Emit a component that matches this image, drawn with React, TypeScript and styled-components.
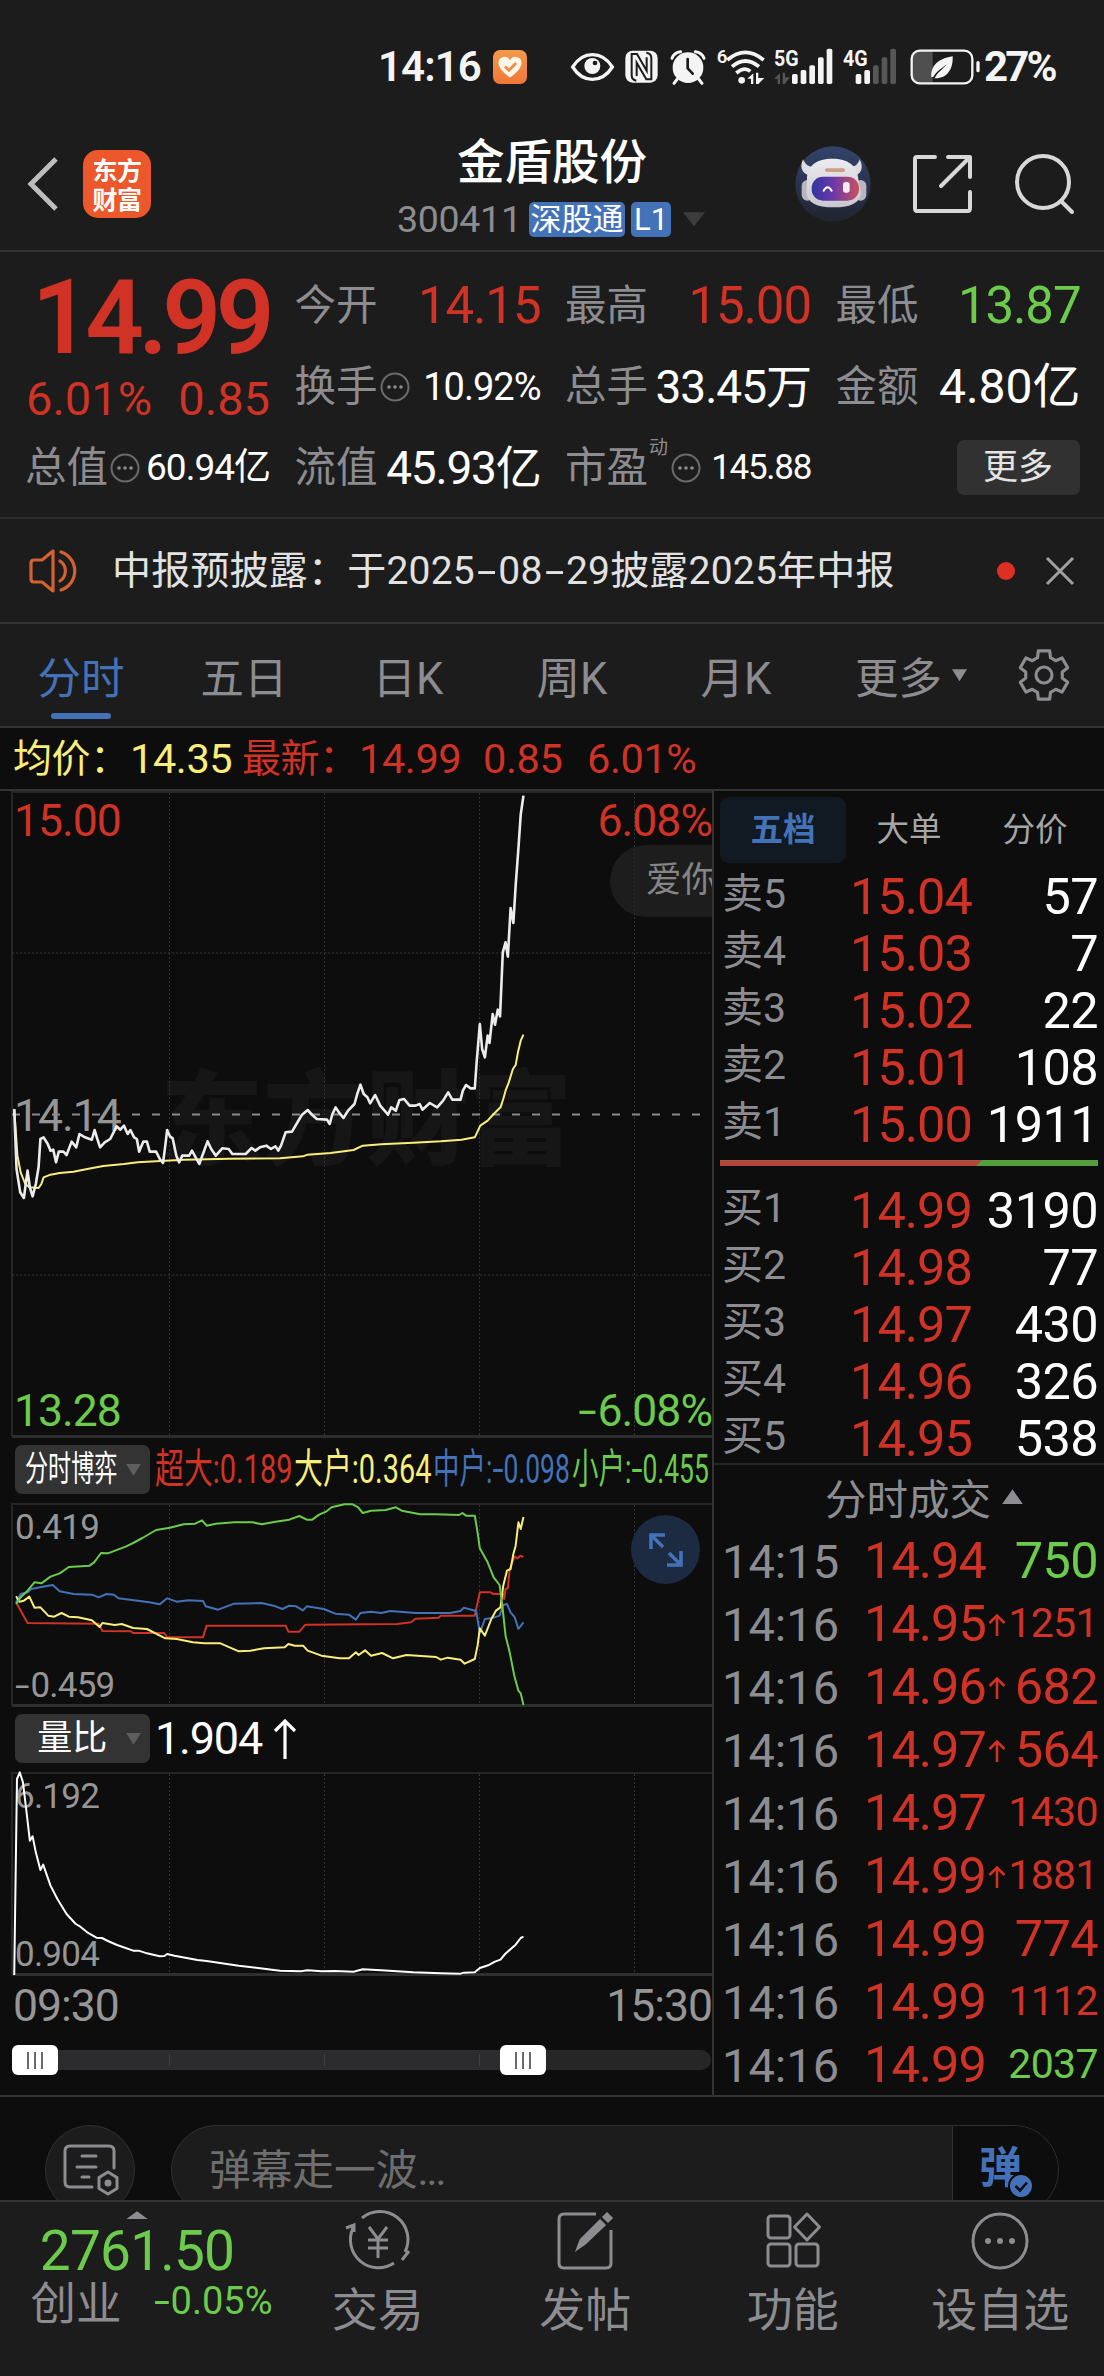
import React from 'react';
import styled, { createGlobalStyle } from 'styled-components';

const RED = '#d03226';
const GREEN = '#6ccb4c';
const BLUE = '#4472b8';
const GREY = '#8c8c91';
const YELLOW = '#f9ee7a';
const PANEL = '#1c1c1c';
const INK = '#0d0d0d';
const LINE = '#333';

const Global = createGlobalStyle`
  * { box-sizing: border-box; }
  body { margin: 0; background: ${INK}; }
  svg { display: block; flex: none; overflow: visible; }
`;

const Page = styled.div`
  width: 1104px;
  height: 2376px;
  overflow: hidden;
  display: flex;
  flex-direction: column;
  background: ${INK};
  color: #fff;
  font-family: Roboto, 'Noto Sans CJK SC', sans-serif;
  white-space: nowrap;
`;

const Txt = styled.span<{ $s: number; $c?: string; $w?: number; $ls?: number }>`
  font-size: ${p => p.$s}px;
  color: ${p => p.$c || 'inherit'};
  font-weight: ${p => p.$w || 400};
  letter-spacing: ${p => p.$ls || 0}px;
  line-height: 1;
`;

/* a hyphen stretched to the width of a minus sign */
const Hyphen = styled.span<{ $w?: number; $k?: number }>`
  display: inline-block;
  width: ${p => p.$w || 0.47}em;
  letter-spacing: 0;
  text-align: center;
  transform: scaleX(${p => p.$k || 1.5});
`;

/* status bar */
const StatusBar = styled.header`
  height: 118px;
  padding: 16px 40px 0 378px;
  display: flex;
  align-items: center;
  background: ${PANEL};
  color: #f4f4f4;
`;
const StatusIcons = styled.div`
  display: flex;
  align-items: center;
  margin-left: 44px;
  flex: 1;
`;

/* title bar */
const TitleBar = styled.div`
  height: 134px;
  display: flex;
  align-items: center;
  background: ${PANEL};
  border-bottom: 2px solid ${LINE};
  padding: 0 28px;
`;
const Side = styled.div<{ $end?: boolean }>`
  width: 300px;
  display: flex;
  align-items: center;
  justify-content: ${p => (p.$end ? 'flex-end' : 'flex-start')};
`;
const Logo = styled.div`
  width: 68px;
  height: 68px;
  margin-left: 25px;
  border-radius: 15px;
  background: #ec572b;
  display: grid;
  place-content: center;
  font: 700 25px/29px 'Noto Sans CJK SC', sans-serif;
  letter-spacing: -0.6px;
`;
const TitleMid = styled.div`
  flex: 1;
  display: flex;
  flex-direction: column;
  align-items: center;
  padding-top: 5px;
`;
const StockName = styled.h1`
  margin: 0;
  font-size: 47.5px;
  font-weight: 500;
  line-height: 56px;
`;
const CodeRow = styled.div`
  width: 310px;
  height: 36px;
  margin: 10px 0 0 0;
  display: flex;
  align-items: center;
`;
const Code = styled.span`
  width: 132px;
  font-size: 37.5px;
  letter-spacing: -0.3px;
  line-height: 36px;
  color: ${GREY};
`;
const Tag = styled.span<{ $w: number }>`
  width: ${p => p.$w}px;
  height: 35px;
  margin-right: 6px;
  border-radius: 5px;
  background: ${BLUE};
  font-size: 31px;
  line-height: 35px;
  text-align: center;
`;

/* quote panel */
const Quote = styled.section`
  height: 268px;
  padding: 24px 25px 18px;
  display: grid;
  grid-template-columns: 243px 244px 244px 243px;
  column-gap: 26.5px;
  grid-template-rows: 60px repeat(2, 81px);
  background: ${PANEL};
  border-bottom: 2px solid #2a2a2a;
`;
const LastPrice = styled.div`
  grid-row: 1 / 3;
  display: flex;
  flex-direction: column;
  align-items: flex-end;
  color: ${RED};
`;
const BigPrice = styled.div`
  font-size: 103px;
  font-weight: 600;
  line-height: 83px;
  letter-spacing: -5.5px;
  margin-right: -1px;
`;
const ChangeRow = styled.div`
  width: 244px;
  margin-right: -2px;
  display: flex;
  justify-content: space-between;
  font-size: 47px;
  line-height: 80px;
`;
const Cell = styled.div`
  height: 60px;
  align-self: end;
  display: flex;
  align-items: center;
  justify-content: space-between;
  margin-right: -2px;
`;
const Label = styled.span`
  display: flex;
  align-items: center;
  gap: 2px;
  font-size: 41.5px;
  line-height: 60px;
  color: ${GREY};
`;
const Sup = styled.sup`
  font-size: 19px;
  line-height: 20px;
  align-self: flex-start;
  margin-left: -1px;
  margin-right: -10px;
`;
const MoreButton = styled.button`
  width: 123px;
  height: 55px;
  justify-self: end;
  align-self: end;
  margin: 0 -1px 3px 0;
  padding: 0;
  border: 0;
  border-radius: 7px;
  background: #313131;
  color: #e4e4e4;
  font: 35px/51px Roboto, 'Noto Sans CJK SC', sans-serif;
`;

/* notice */
const Notice = styled.section`
  height: 105px;
  padding: 0 29px;
  display: flex;
  align-items: center;
  background: ${PANEL};
  border-bottom: 2px solid ${LINE};
  color: #e2e2e2;
`;
const NoticeText = styled.p`
  flex: 1;
  margin: 0 0 0 31px;
  font-size: 39px;
  letter-spacing: 0.2px;
  line-height: 50px;
`;
const Dot = styled.i`
  width: 18px;
  height: 18px;
  border-radius: 9px;
  background: #dd3023;
  margin-right: 30px;
`;

/* period tabs */
const Tabs = styled.nav`
  height: 104px;
  display: grid;
  grid-template-columns: 162px repeat(4, 164px) 186px 1fr;
  align-items: center;
  background: ${PANEL};
  border-bottom: 2px solid ${LINE};
`;
const Tab = styled.div<{ $on?: boolean; $shift?: number }>`
  height: 102px;
  display: flex;
  align-items: center;
  justify-content: center;
  position: relative;
  padding-right: ${p => p.$shift || 0}px;
  font-size: 43.5px;
  color: ${p => (p.$on ? BLUE : GREY)};
  &::after {
    content: '';
    display: ${p => (p.$on ? 'block' : 'none')};
    position: absolute;
    left: 51px;
    bottom: 7px;
    width: 60px;
    height: 6px;
    border-radius: 3px;
    background: ${BLUE};
  }
`;

const Summary = styled.div`
  height: 63px;
  padding: 0 13px;
  display: flex;
  align-items: center;
  color: ${RED};
  border-bottom: 2px solid ${LINE};
`;
const SumPart = styled.span<{ $w: number; $yellow?: boolean; $cjk?: boolean }>`
  width: ${p => p.$w}px;
  line-height: 60px;
  font-size: ${p => (p.$cjk ? 39 : 41.5)}px;
  letter-spacing: -0.4px;
  ${p => (p.$yellow ? `color: ${YELLOW};` : '')}
`;

/* main area */
const Main = styled.main`
  height: 1306px;
  display: flex;
  border-bottom: 2px solid ${LINE};
`;
const Charts = styled.div`
  width: 714px;
  border-right: 2px solid ${LINE};
  display: flex;
  flex-direction: column;
  overflow: hidden;
`;
const ChartBox = styled.div<{ $h: number }>`
  position: relative;
  height: ${p => p.$h}px;
`;
const Overlay = styled.span<{ $x?: number; $r?: number; $y: number; $s: number; $c?: string }>`
  position: absolute;
  ${p => (p.$x !== undefined ? `left: ${p.$x}px;` : `right: ${p.$r}px;`)}
  top: ${p => p.$y - 25}px;
  font-size: ${p => p.$s}px;
  letter-spacing: -0.022em;
  line-height: 50px;
  color: ${p => p.$c || '#969696'};
`;
const Watermark = styled.div`
  position: absolute;
  left: 160px;
  top: 262px;
  font: 900 103px/120px 'Noto Sans CJK SC', sans-serif;
  color: #161616;
`;
const Bubble = styled.div`
  position: absolute;
  left: 610px;
  top: 54px;
  width: 140px;
  height: 72px;
  padding-left: 36px;
  border-radius: 36px;
  background: rgba(40, 40, 40, 0.62);
  color: #858585;
  font-size: 35.5px;
  line-height: 70px;
`;
const IndicatorRow = styled.div<{ $h: number; $pt: number }>`
  height: ${p => p.$h}px;
  padding: ${p => p.$pt}px 0 0 15px;
  display: flex;
  align-items: flex-start;
`;
const Picker = styled.div`
  width: 135px;
  height: 49px;
  padding: 0 9px 0 10px;
  border-radius: 7px;
  background: #333;
  display: flex;
  align-items: center;
  justify-content: space-between;
  font-size: 35px;
  line-height: 46px;
`;
const Caret = styled.i<{ $c?: string; $w: number; $h: number; $up?: boolean; $ml?: number }>`
  width: ${p => p.$w}px;
  height: ${p => p.$h}px;
  margin-left: ${p => p.$ml || 0}px;
  flex: none;
  background: ${p => p.$c || '#5e5e5e'};
  clip-path: ${p => (p.$up ? 'polygon(50% 0, 100% 100%, 0 100%)' : 'polygon(0 0, 100% 0, 50% 100%)')};
`;
const Squeeze = styled.span<{ $w: number; $k: number; $c?: string; $s: number }>`
  width: ${p => p.$w}px;
  flex: none;
  color: ${p => p.$c || '#fff'};
  font-size: ${p => p.$s}px;
  line-height: 48px;
  > span {
    display: inline-block;
    transform: scaleX(${p => p.$k});
    transform-origin: 0 50%;
  }
`;
const Legend = styled.div`
  display: flex;
  margin-left: 5px;
`;
const Expand = styled.div`
  position: absolute;
  left: 631px;
  top: 12px;
  width: 69px;
  height: 69px;
  border-radius: 50%;
  background: #1c2b42;
  display: grid;
  place-items: center;
`;
const TimeAxis = styled.div`
  height: 60px;
  padding: 0 0 0 13px;
  display: flex;
  justify-content: space-between;
  font-size: 44.5px;
  letter-spacing: -1px;
  line-height: 61px;
  color: #969696;
`;
const Slider = styled.div`
  position: relative;
  height: 20px;
  margin: 14px 1px 0 12px;
  border-radius: 10px;
  background: linear-gradient(90deg, #2c2c2e 513px, #262626 513px);
`;
const Tick = styled.i<{ $x: number }>`
  position: absolute;
  left: ${p => p.$x}px;
  top: 4px;
  width: 1px;
  height: 12px;
  background: #414143;
`;
const Handle = styled.div<{ $x: number }>`
  position: absolute;
  left: ${p => p.$x}px;
  top: -5px;
  width: 46px;
  height: 30px;
  border-radius: 6px;
  background: #fff;
  display: flex;
  align-items: center;
  justify-content: center;
  gap: 5px;
  i { width: 2px; height: 17px; background: #6a6a6a; }
`;

/* order book */
const Book = styled.aside`
  width: 390px;
  display: flex;
  flex-direction: column;
`;
const BookTabs = styled.div`
  height: 72px;
  padding: 6px 6px 0;
  display: grid;
  grid-template-columns: repeat(3, 126px);
`;
const BookTab = styled.div<{ $on?: boolean }>`
  height: 66px;
  border-radius: 9px;
  background: ${p => (p.$on ? '#111a22' : 'transparent')};
  color: ${p => (p.$on ? BLUE : '#a6a6a6')};
  font-weight: ${p => (p.$on ? 700 : 400)};
  font-size: 32.5px;
  line-height: 67px;
  text-align: center;
`;
const Row = styled.div`
  height: 57px;
  padding: 0 6px 0 8px;
  display: grid;
  grid-template-columns: 128px 124px 1fr;
  align-items: center;
  line-height: 57px;
`;
const Side5 = styled.span`
  font-size: 41px;
  color: ${GREY};
  padding-bottom: 5px;
  line-height: 52px;
`;
const Price = styled.span`
  font-size: 50.5px;
  letter-spacing: -1px;
  color: ${RED};
`;
const Vol = styled.span<{ $c?: string; $s?: number }>`
  font-size: ${p => p.$s || 50.5}px;
  letter-spacing: -0.6px;
  color: ${p => p.$c || '#fff'};
  text-align: right;
`;
const Ratio = styled.div`
  height: 6px;
  margin: 7px 6px 16px;
  background: #539f3c;
  &::before {
    content: '';
    display: block;
    width: 262px;
    height: 6px;
    background: #b5453c;
    clip-path: polygon(0 0, 100% 0, calc(100% - 6px) 100%, 0 100%);
  }
`;
const DealsHead = styled.div`
  height: 67px;
  margin-top: -4px;
  border-top: 2px solid #262626;
  display: flex;
  align-items: center;
  justify-content: center;
  gap: 11px;
  font-size: 41.5px;
  color: ${GREY};
  padding-left: 30px;
`;
const Deal = styled.div`
  height: 63px;
  padding: 0 6px 0 8px;
  display: grid;
  grid-template-columns: 142px 124px 18px 1fr;
  align-items: center;
  line-height: 63px;
`;
const DealTime = styled.span`
  font-size: 47px;
  color: ${GREY};
  padding-top: 2px;
`;

/* comments strip */
const Strip = styled.div`
  height: 103px;
  padding: 28px 45px 0;
  display: flex;
  align-items: flex-start;
  gap: 36px;
  overflow: hidden;
`;
const RoundBtn = styled.div`
  width: 90px;
  height: 90px;
  flex: none;
  border: 1px solid #303030;
  border-radius: 50%;
  background: ${PANEL};
  display: grid;
  place-items: center;
`;
const InputPill = styled.div`
  width: 888px;
  height: 90px;
  border: 1px solid #303030;
  border-radius: 45px;
  background: ${PANEL};
  display: flex;
  overflow: hidden;
  padding-left: 37px;
  color: #6e6e6e;
  font-size: 41.7px;
  line-height: 90px;
`;
const DanToggle = styled.div`
  width: 106px;
  margin-left: auto;
  border-left: 1px solid #303030;
  background: ${INK};
  position: relative;
  padding-left: 26px;
  color: ${BLUE};
  font-size: 43px;
  font-weight: 700;
  line-height: 85px;
  svg { position: absolute; left: 55px; top: 47px; }
`;

/* bottom bar */
const BottomBar = styled.footer`
  height: 176px;
  display: grid;
  grid-template-columns: 274px repeat(4, 207.5px);
  background: ${PANEL};
  border-top: 2px solid ${LINE};
`;
const IndexCell = styled.div`
  display: flex;
  flex-direction: column;
  align-items: center;
  padding-top: 9px;
  color: ${GREEN};
`;
const IndexRow = styled.div`
  width: 242px;
  margin-left: 29px;
  margin-top: -1px;
  display: flex;
  justify-content: space-between;
  line-height: 46px;
`;
const NavItem = styled.div`
  display: flex;
  flex-direction: column;
  align-items: center;
  padding-top: 8px;
  gap: 9px;
  color: ${GREY};
  font-size: 46px;
  line-height: 58px;
`;

const DotsIcon = () => (
  <svg width="30" height="30" viewBox="0 0 30 30">
    <circle cx="15" cy="15" r="13.5" fill="none" stroke="#6b6b6b" strokeWidth="2" />
    {[9, 15, 21].map(x => <circle key={x} cx={x} cy="15" r="1.8" fill="#8c8c91" />)}
  </svg>
);

const EyeIcon = () => (
  <svg width="43" height="30" viewBox="0 0 129 90">
    <path d="M5 45C22 18 42 8 64 8s43 10 60 37C107 72 87 82 64 82S22 72 5 45Z" fill="none" stroke="#f4f4f4" strokeWidth="10" />
    <circle cx="64" cy="42" r="24" fill="#f4f4f4" />
    <circle cx="72" cy="33" r="7" fill="#1c1c1c" />
  </svg>
);
const NfcIcon = () => (
  <svg width="33" height="33" viewBox="0 0 99 99">
    <rect x="1" y="2" width="97" height="96" rx="22" fill="#f4f4f4" />
    <path d="M34 92Q20 90 20 76V12L36 12L65 62V22M64 8Q79 10 79 24V88L64 88L35 38V78" fill="none" stroke="#1c1c1c" strokeWidth="6" />
  </svg>
);
const AlarmIcon = () => (
  <svg width="36" height="36" viewBox="0 0 108 108">
    <circle cx="54" cy="56" r="46" fill="#f4f4f4" />
    <path d="M6 28A30 30 0 0 1 32 8M76 8A30 30 0 0 1 102 28" stroke="#f4f4f4" strokeWidth="9" fill="none" strokeLinecap="round" />
    <path d="M22 90L12 103M86 90L96 103" stroke="#f4f4f4" strokeWidth="9" strokeLinecap="round" />
    <path d="M53 30V58L68 74" fill="none" stroke="#1c1c1c" strokeWidth="8" strokeLinecap="round" />
  </svg>
);
const WifiIcon = () => (
  <svg width="50" height="37" viewBox="0 0 150 111">
    <text x="2" y="46" fontSize="56" fontWeight="600" fill="#f4f4f4">6</text>
    <g fill="none" stroke="#f4f4f4" strokeWidth="11">
      <path d="M34 36Q88 -10 143 36" />
      <path d="M48 56Q88 22 129 56" />
      <path d="M61 75Q86 54 103 70" />
    </g>
    <circle cx="77" cy="97" r="10" fill="#f4f4f4" />
    <path d="M94 92L112 76V108H105V92ZM120 74H127V90H145L127 108H120Z" fill="#f4f4f4" />
  </svg>
);
const SignalIcon = ({ label, bars, w }: { label: string; bars: [number, number, boolean][]; w: number }) => (
  <svg width={w / 3} height="37" viewBox={`0 0 ${w} 111`}>
    <text x="0" y="54" fontSize="66" fontWeight="700" fill="#f4f4f4" textLength="74" lengthAdjust="spacingAndGlyphs">{label}</text>
    {label === '5G' && <path d="M0 92L18 76V108H11V92ZM26 74H33V88H48L32 108H26Z" fill="#555" />}
    {bars.map(([x, h, on]) => <rect key={x} x={x} y={108 - h} width="17" height={h} rx="5" fill={on ? '#f4f4f4' : '#575757'} />)}
  </svg>
);
const BatteryIcon = () => (
  <svg width="72" height="36" viewBox="0 0 216 108">
    <clipPath id="cell"><rect x="7" y="7" width="178" height="94" rx="22" /></clipPath>
    <rect x="0" y="0" width="68" height="108" fill="#4f4f4f" clipPath="url(#cell)" />
    <rect x="5" y="5" width="182" height="98" rx="24" fill="none" stroke="#f4f4f4" strokeWidth="7" />
    <rect x="199" y="36" width="10" height="34" rx="5" fill="#f4f4f4" />
    <path d="M128 22C90 28 62 46 64 84L70 84C78 68 96 58 110 46C98 62 82 70 74 88C110 90 130 62 128 22Z" fill="#f4f4f4" />
  </svg>
);
const Badge = styled.svg`
  margin-left: 12px;
`;
const HeartBadge = () => (
  <Badge width="34" height="34" viewBox="0 0 34 34">
    <defs><linearGradient id="hb" x1="0" y1="0" x2="0" y2="1"><stop offset="0" stopColor="#f39a4c" /><stop offset="1" stopColor="#ee7735" /></linearGradient></defs>
    <rect width="34" height="34" rx="7" fill="url(#hb)" />
    <path d="M17 27.5C9 22 5.500 17 5.500 12.500A6 6 0 0 1 17 10.500A6 6 0 0 1 28.500 12.500C28.500 17 25 22 17 27.500Z" fill="#fff6ea" />
    <path d="M12 16.500L16 20.500L23 13" fill="none" stroke="#f0873f" strokeWidth="2.600" />
  </Badge>
);

const Robot = () => (
  <svg width="76" height="76" viewBox="0 0 228 228">
    <defs>
      <linearGradient id="bg" x1="0" y1="0" x2="0" y2="1"><stop offset="0" stopColor="#33436b" /><stop offset="1" stopColor="#20242f" /></linearGradient>
      <linearGradient id="visor" x1="0" y1="0" x2="1" y2="0"><stop offset="0" stopColor="#3136a0" /><stop offset=".45" stopColor="#6a38a8" /><stop offset="1" stopColor="#c9535f" /></linearGradient>
      <linearGradient id="shell" x1="0" y1="0" x2="0" y2="1"><stop offset="0" stopColor="#ecebef" /><stop offset="1" stopColor="#c9c7cf" /></linearGradient>
    </defs>
    <circle cx="114" cy="114" r="113" fill="url(#bg)" />
    <path d="M24 40C14 62 20 80 40 88L62 60C44 66 32 58 24 40ZM194 40C206 62 200 80 184 88L160 60C176 66 188 58 194 40Z" fill="#dddbe3" />
    <rect x="20" y="102" width="34" height="62" rx="17" fill="#b9b6c0" />
    <rect x="180" y="102" width="34" height="62" rx="17" fill="#b9b6c0" />
    <path d="M36 100C36 58 66 38 112 38S188 58 190 100L198 140C196 170 168 184 116 184S38 170 34 140Z" fill="url(#shell)" />
    <rect x="90" y="67" width="60" height="11" rx="5" fill="#c9a184" />
    <rect x="50" y="92" width="142" height="72" rx="34" fill="url(#visor)" />
    <path d="M86 134Q98 114 110 134" fill="none" stroke="#fff" strokeWidth="6" strokeLinecap="round" />
    <rect x="144" y="108" width="20" height="32" rx="8" fill="#f8e9f2" />
  </svg>
);
const HeadIcon = styled.svg<{ $ml: number }>`
  margin-left: ${p => p.$ml}px;
`;
const ShareIcon = () => (
  <HeadIcon $ml={41} width="60" height="60" viewBox="0 0 60 60" fill="none" stroke="#d8d8d8" strokeWidth="4" strokeLinecap="round" strokeLinejoin="round">
    <path d="M23 3H5Q3 3 3 5V54Q3 57 5 57H56Q58 57 58 54V38M36 3H58V23M57 4L29 32" />
  </HeadIcon>
);
const SearchIcon = () => (
  <HeadIcon $ml={42} width="62" height="62" viewBox="0 0 62 62" fill="none" stroke="#d8d8d8" strokeWidth="4" strokeLinecap="round">
    <circle cx="29" cy="29" r="26" />
    <path d="M47 48L58 59" />
  </HeadIcon>
);
const Speaker = () => (
  <svg width="52" height="44" viewBox="0 0 52 44" fill="none" stroke="#d2622f" strokeWidth="3.200" strokeLinejoin="round" strokeLinecap="round">
    <path d="M24 2V42L13 33H5Q2 33 2 30V14Q2 11 5 11H13Z" />
    <path d="M31 12A12 12 0 0 1 31 32M32 3A20 20 0 0 1 32 41" />
  </svg>
);
const Gear = () => {
  const pts: string[] = [];
  for (let i = 0; i < 6; i++) {
    const a = (i * Math.PI) / 3 - Math.PI / 2;
    [[-0.36, 18.5], [-0.23, 24.8], [0.23, 24.8], [0.36, 18.5]].forEach(([d, r]) =>
      pts.push(`${(26 + r * Math.cos(a + d)).toFixed(1)},${(26 + r * Math.sin(a + d)).toFixed(1)}`));
  }
  return (
    <svg width="52" height="52" viewBox="0 0 52 52" fill="none" stroke={GREY} strokeWidth="3.200" strokeLinejoin="round">
      <polygon points={pts.join(' ')} />
      <circle cx="26" cy="26" r="8" />
    </svg>
  );
};

const PRICE = '31,990 36,1170 44,1240 52,1257 60,1175 65,1225 71,1252 78,1215 84,1165 88,1080 95,1075 104,1095 110,1115 116,1112 122,1150 128,1118 138,1118 145,1128 156,1088 166,1105 173,1065 185,1075 200,1082 206,1053 212,1080 218,1105 228,1090 240,1080 254,1042 262,1052 270,1040 278,1065 284,1053 292,1075 298,1080 303,1118 312,1088 320,1088 326,1118 340,1118 348,1140 355,1152 360,1100 364,1053 370,1072 376,1078 384,1130 390,1150 397,1130 412,1130 418,1115 426,1135 434,1155 442,1125 452,1087 460,1110 470,1130 484,1108 498,1110 506,1125 535,1125 548,1107 556,1115 566,1105 580,1100 590,1110 600,1102 606,1115 612,1100 622,1060 636,1058 652,1020 658,1007 670,993 680,1008 690,1020 712,1022 718,1035 724,1005 731,985 738,1000 748,1017 758,995 772,975 778,945 785,917 792,945 800,955 806,973 817,948 828,980 845,1007 852,985 862,995 870,963 880,960 892,980 905,980 914,975 920,992 936,972 952,985 965,965 976,940 985,962 1003,962 1008,935 1015,918 1025,928 1034,928 1038,850 1045,735 1050,810 1056,835 1062,770 1066,792 1073,705 1078,737 1084,692 1089,712 1095,520 1101,490 1106,533 1112,387 1118,432 1123,320 1129,208 1134,107 1140,50';
const AVERAGE = '31,990 38,1130 45,1180 55,1215 65,1225 84,1227 90,1215 95,1195 110,1187 130,1182 160,1178 190,1170 225,1161 270,1155 300,1150 350,1146 400,1142 500,1139 610,1138 660,1132 670,1127 720,1122 770,1113 790,1100 830,1096 900,1091 960,1087 1005,1082 1034,1075 1046,1040 1062,1025 1075,1005 1090,985 1096,960 1101,935 1108,910 1117,870 1123,858 1128,820 1134,785 1140,767';
const SMALL = '35,525 45,505 60,485 75,460 90,463 110,443 130,433 150,414 195,410 205,400 220,372 235,373 275,352 290,342 310,327 340,303 370,296 400,286 425,284 440,274 450,290 470,284 510,280 550,280 570,286 600,278 630,272 652,261 668,272 680,272 695,257 710,248 722,235 750,226 768,226 780,235 790,252 808,245 840,243 862,235 875,245 915,256 950,256 1000,258 1007,252 1015,260 1034,260 1040,310 1045,358 1062,400 1075,445 1088,468 1094,530 1101,620 1110,670 1120,740 1129,785 1134,793 1140,828';
const MIDDLE = '35,520 45,495 60,490 68,480 90,474 115,468 130,487 160,495 200,497 215,505 232,495 248,497 258,508 300,515 325,520 348,526 364,508 385,518 410,514 442,516 448,532 475,542 510,524 570,522 600,532 615,540 630,530 645,532 660,544 668,532 705,540 730,554 760,557 775,572 785,552 808,548 830,552 850,546 905,552 980,552 1003,546 1010,536 1037,546 1045,612 1056,570 1070,568 1088,560 1096,528 1104,525 1112,550 1121,565 1129,600 1140,580';
const LARGE = '35,502 42,518 52,515 64,503 75,536 88,535 105,560 118,563 134,552 150,563 170,565 200,574 217,594 223,582 250,588 265,585 290,597 320,600 360,628 385,630 420,640 445,643 480,643 500,655 520,667 545,665 575,658 620,655 628,645 642,650 660,650 670,665 700,680 740,688 760,688 775,670 781,678 795,664 808,680 832,672 856,688 885,678 950,684 960,692 975,686 1003,692 1012,704 1034,690 1040,650 1045,598 1056,620 1070,570 1080,545 1090,535 1096,470 1104,425 1112,420 1118,375 1123,350 1129,280 1134,300 1140,264';
const HUGE = '35,520 60,582 215,584 223,606 285,607 290,612 357,612 364,624 442,625 450,590 622,590 628,608 652,608 665,587 865,585 895,580 905,569 955,566 960,560 1034,560 1045,490 1068,490 1075,495 1095,495 1098,510 1101,480 1106,478 1110,420 1117,395 1121,383 1127,388 1133,380 1140,384';
const RATIO = '31,648 37,60 43,40 50,70 57,150 65,245 71,232 78,280 88,333 94,317 110,380 125,420 145,465 165,495 175,503 190,520 210,536 222,537 235,546 255,558 290,575 302,575 320,583 348,592 358,591 364,585 380,590 430,603 450,606 520,620 610,635 655,637 670,634 700,637 730,636 770,638 790,631 830,634 900,640 960,643 1003,644 1010,641 1034,640 1045,627 1065,618 1078,608 1090,602 1100,585 1123,557 1134,537 1140,533';

const PlotSvg = styled.svg`
  position: relative;
`;
type Serie = { pts: string; c: string; w?: number };
const Plot = ({ h, top, series, rows = [], mid }: { h: number; top: number; series: Serie[]; rows?: number[]; mid?: number }) => (
  <PlotSvg width="712" height={h}>
    <path d={`M712 1H12V${h - 1.5}`} fill="none" stroke="#262626" strokeWidth="2" />
    <path d={`M12 ${h - 1.5}H712`} stroke="#2e2e2e" strokeWidth="3" />
    {[169.5, 324.5, 479.5, 634.5].map(x => <path key={x} d={`M${x} 2V${h - 3}`} stroke="#343434" strokeDasharray="2 2" />)}
    {rows.map(y => <path key={y} d={`M12 ${y}H712`} stroke="#343434" strokeDasharray="2 2" />)}
    {mid && <path d={`M12 ${mid}H704`} stroke="#8a8a8a" strokeWidth="2" strokeDasharray="8 12" />}
    <g transform={`translate(0 ${-top}) scale(.45918 .33333)`} fill="none" strokeLinejoin="round">
      {series.map(s => <polyline key={s.c} points={s.pts} stroke={s.c} strokeWidth={s.w || 2} vectorEffect="non-scaling-stroke" />)}
    </g>
  </PlotSvg>
);

const RatioValue = styled.span`
  margin: 2px 11px 0 5px;
  font-size: 45px;
  letter-spacing: -1.2px;
  line-height: 45px;
`;
const RiseArrow = styled.svg`
  margin-top: 4px;
`;

const asks = [['卖5', '15.04', '57'], ['卖4', '15.03', '7'], ['卖3', '15.02', '22'], ['卖2', '15.01', '108'], ['卖1', '15.00', '1911']];
const bids = [['买1', '14.99', '3190'], ['买2', '14.98', '77'], ['买3', '14.97', '430'], ['买4', '14.96', '326'], ['买5', '14.95', '538']];
const deals: [string, string, boolean, string, boolean?][] = [
  ['14:15', '14.94', false, '750', true],
  ['14:16', '14.95', true, '1251'],
  ['14:16', '14.96', true, '682'],
  ['14:16', '14.97', true, '564'],
  ['14:16', '14.97', false, '1430'],
  ['14:16', '14.99', true, '1881'],
  ['14:16', '14.99', false, '774'],
  ['14:16', '14.99', false, '1112'],
  ['14:16', '14.99', false, '2037', true],
];

const Level = ({ row }: { row: string[] }) => (
  <Row><Side5>{row[0]}</Side5><Price>{row[1]}</Price><Vol>{row[2]}</Vol></Row>
);

const UpArrow = () => (
  <svg width="18" height="24" viewBox="0 0 18 24" fill="none" stroke={RED} strokeWidth="2.600">
    <path d="M9 24V4M1.500 11L9 3.500L16.500 11" />
  </svg>
);

export default function App() {
  return (
    <Page>
      <Global />
      <StatusBar>
        <Txt $s={42} $w={600} $ls={-0.9}>14:16</Txt>
        <HeartBadge />
        <StatusIcons>
          <EyeIcon />
          <svg width="11" height="1" /><NfcIcon />
          <svg width="12" height="1" /><AlarmIcon />
          <svg width="10" height="1" /><WifiIcon />
          <svg width="8" height="1" />
          <SignalIcon label="5G" w={176} bars={[[54, 30, true], [80, 42, true], [106, 56, true], [132, 80, true], [158, 106, true]]} />
          <svg width="10" height="1" />
          <SignalIcon label="4G" w={160} bars={[[38, 30, true], [64, 42, true], [90, 56, false], [116, 80, false], [142, 106, false]]} />
          <svg width="14" height="1" /><BatteryIcon />
          <svg width="2" height="1" />
          <Txt $s={42} $w={700} $ls={-2.8}>27%</Txt>
        </StatusIcons>
      </StatusBar>

      <TitleBar>
        <Side>
          <svg width="30" height="54" viewBox="0 0 30 54" fill="none" stroke="#bdbdbd" strokeWidth="5"><path d="M28 2L3 27L28 52" /></svg>
          <Logo><span>东方</span><span>财富</span></Logo>
        </Side>
        <TitleMid>
          <StockName>金盾股份</StockName>
          <CodeRow>
            <Code>300411</Code>
            <Tag $w={96}>深股通</Tag>
            <Tag $w={40}>L1</Tag>
            <Caret $w={22} $h={14} $ml={6} $c="#3c3c3c" />
          </CodeRow>
        </TitleMid>
        <Side $end><Robot /><ShareIcon /><SearchIcon /></Side>
      </TitleBar>

      <Quote>
        <LastPrice>
          <BigPrice>14.99</BigPrice>
          <ChangeRow><span>6.01%</span><span>0.85</span></ChangeRow>
        </LastPrice>
        <Cell><Label>今开</Label><Txt $s={51} $ls={-1.1} $c={RED}>14.15</Txt></Cell>
        <Cell><Label>最高</Label><Txt $s={51} $ls={-1.1} $c={RED}>15.00</Txt></Cell>
        <Cell><Label>最低</Label><Txt $s={51} $ls={-1.1} $c={GREEN}>13.87</Txt></Cell>
        <Cell><Label>换手<DotsIcon /></Label><Txt $s={38} $ls={-1}>10.92%</Txt></Cell>
        <Cell><Label>总手</Label><Txt $s={46} $ls={-1}>33.45万</Txt></Cell>
        <Cell><Label>金额</Label><Txt $s={48}>4.80亿</Txt></Cell>
        <Cell><Label>总值<DotsIcon /></Label><Txt $s={37} $ls={-1}>60.94亿</Txt></Cell>
        <Cell><Label>流值</Label><Txt $s={46} $ls={-1.2}>45.93亿</Txt></Cell>
        <Cell><Label>市盈<Sup>动</Sup><svg width="9" height="1" /><DotsIcon /></Label><Txt $s={35} $ls={-1.3}>145.88</Txt></Cell>
        <MoreButton>更多</MoreButton>
      </Quote>

      <Notice>
        <Speaker />
        <NoticeText>中报预披露：于2025<Hyphen $w={0.6} $k={1.8}>-</Hyphen>08<Hyphen $w={0.6} $k={1.8}>-</Hyphen>29披露2025年中报</NoticeText>
        <Dot />
        <svg width="30" height="30" viewBox="0 0 30 30" stroke="#a0a0a0" strokeWidth="3"><path d="M2 2L28 28M28 2L2 28" /></svg>
      </Notice>

      <Tabs>
        <Tab $on>分时</Tab><Tab>五日</Tab><Tab>日K</Tab><Tab>周K</Tab><Tab>月K</Tab>
        <Tab>更多<Caret $w={15} $h={12} $ml={10} $c={GREY} /></Tab>
        <Tab $shift={20}><Gear /></Tab>
      </Tabs>

      <Summary>
        <SumPart $w={117} $yellow $cjk>均价：</SumPart>
        <SumPart $w={112} $yellow>14.35</SumPart>
        <SumPart $w={117} $cjk>最新：</SumPart>
        <SumPart $w={124}>14.99</SumPart>
        <SumPart $w={104}>0.85</SumPart>
        <SumPart $w={120}>6.01%</SumPart>
      </Summary>

      <Main>
        <Charts>
          <ChartBox $h={647}>
            <Watermark>东方财富</Watermark>
            <Overlay $x={14} $y={325} $s={44.5}>14.14</Overlay>
            <Plot h={647} top={12} rows={[162, 484]} mid={323.5} series={[{ pts: AVERAGE, c: YELLOW }, { pts: PRICE, c: '#ececec', w: 2.6 }]} />
            <Overlay $x={14} $y={30} $s={44.5} $c={RED}>15.00</Overlay>
            <Overlay $r={0} $y={30} $s={44.5} $c={RED}>6.08%</Overlay>
            <Overlay $x={14} $y={620} $s={44.5} $c={GREEN}>13.28</Overlay>
            <Overlay $r={0} $y={620} $s={44.5} $c={GREEN}><Hyphen>-</Hyphen>6.08%</Overlay>
            <Bubble>爱你</Bubble>
          </ChartBox>
          <IndicatorRow $h={65} $pt={7}>
            <Picker>
              <Squeeze $w={92} $k={0.66} $s={35}><span>分时博弈</span></Squeeze>
              <Caret $w={15} $h={12} />
            </Picker>
            <Legend>
              <Squeeze $w={139} $k={0.705} $s={41} $c={RED}><span>超大:0.189</span></Squeeze>
              <Squeeze $w={139} $k={0.705} $s={41} $c={YELLOW}><span>大户:0.364</span></Squeeze>
              <Squeeze $w={139} $k={0.645} $s={41} $c={BLUE}><span>中户:<Hyphen $w={0.42}>-</Hyphen>0.098</span></Squeeze>
              <Squeeze $w={139} $k={0.645} $s={41} $c={GREEN}><span>小户:<Hyphen $w={0.42}>-</Hyphen>0.455</span></Squeeze>
            </Legend>
          </IndicatorRow>
          <ChartBox $h={204}>
            <Plot h={204} top={74} series={[{ pts: HUGE, c: RED }, { pts: MIDDLE, c: BLUE }, { pts: LARGE, c: YELLOW }, { pts: SMALL, c: GREEN }]} />
            <Overlay $x={15} $y={25} $s={35}>0.419</Overlay>
            <Overlay $x={14} $y={183} $s={35}><Hyphen>-</Hyphen>0.459</Overlay>
            <Expand>
              <svg width="34" height="34" viewBox="0 0 34 34" fill="none" stroke={BLUE} strokeWidth="3.600">
                <path d="M2 16V2H16M2 2L14 14M32 18V32H18M32 32L20 20" />
              </svg>
            </Expand>
          </ChartBox>
          <IndicatorRow $h={65} $pt={7}>
            <Picker><Squeeze $w={88} $k={1} $s={35}><span>&#8202;&nbsp;量比</span></Squeeze><Caret $w={15} $h={12} /></Picker>
            <RatioValue>1.904</RatioValue>
            <RiseArrow width="24" height="42" viewBox="0 0 24 42" fill="none" stroke="#fff" strokeWidth="3.200"><path d="M12 41V3M2 13L12 3L22 13" /></RiseArrow>
          </IndicatorRow>
          <ChartBox $h={204}>
            <Overlay $x={15} $y={25} $s={35}>6.192</Overlay>
            <Overlay $x={15} $y={183} $s={35}>0.904</Overlay>
            <Plot h={204} top={13} series={[{ pts: RATIO, c: '#fff' }]} />
          </ChartBox>
          <TimeAxis><span>09:30</span><span>15:30</span></TimeAxis>
          <Slider>
            <Tick $x={157} /><Tick $x={312} /><Tick $x={467} />
            <Handle $x={0}><i /><i /><i /></Handle>
            <Handle $x={488}><i /><i /><i /></Handle>
          </Slider>
        </Charts>

        <Book>
          <BookTabs><BookTab $on>五档</BookTab><BookTab>大单</BookTab><BookTab>分价</BookTab></BookTabs>
          <svg width="1" height="5" />
          {asks.map(r => <Level key={r[0]} row={r} />)}
          <Ratio />
          {bids.map(r => <Level key={r[0]} row={r} />)}
          <DealsHead>分时成交<Caret $up $w={21} $h={15} $c={GREY} /></DealsHead>
          {deals.map((d, i) => (
            <Deal key={i}>
              <DealTime>{d[0]}</DealTime>
              <Price>{d[1]}</Price>
              {d[2] ? <UpArrow /> : <i />}
              <Vol $s={d[3].length > 3 ? 41 : undefined} $c={d[4] ? GREEN : RED}>{d[3]}</Vol>
            </Deal>
          ))}
        </Book>
      </Main>

      <Strip>
        <RoundBtn>
          <svg width="56" height="52" viewBox="0 0 56 52" fill="none" stroke={GREY} strokeWidth="3" strokeLinecap="round" strokeLinejoin="round">
            <path d="M30 43H8Q3 43 3 38V7Q3 2 8 2H47Q52 2 52 7V24M20 12H34M15 23H34M20 33H27" />
            <path d="M46 28L55 33.500V44.500L46 50L37 44.500V33.500Z" />
            <circle cx="46" cy="39" r="2" fill={GREY} />
          </svg>
        </RoundBtn>
        <InputPill>
          弹幕走一波<Txt $s={41.7} $ls={-2} style={{ lineHeight: 'inherit' }}>...</Txt>
          <DanToggle>
            弹
            <svg width="26" height="26" viewBox="0 0 26 26"><circle cx="13" cy="13" r="12" fill={BLUE} stroke={INK} strokeWidth="2" /><path d="M7.500 13L12 17.500L19 9.500" fill="none" stroke={INK} strokeWidth="2.600" /></svg>
          </DanToggle>
        </InputPill>
      </Strip>

      <BottomBar>
        <IndexCell>
          <Caret $up $w={22} $h={8} $c={GREY} />
          <Txt $s={55} $ls={-0.8} style={{ lineHeight: '64px' }}>2761.50</Txt>
          <IndexRow><Txt $s={45.5} $c={GREY}>创业</Txt><Txt $s={38}><Hyphen>-</Hyphen>0.05%</Txt></IndexRow>
        </IndexCell>
        <NavItem>
          <svg width="66" height="62" viewBox="0 0 66 62" fill="none" stroke={GREY} strokeWidth="3">
            <path d="M17 8A28 28 0 0 1 60 42M57 50L64 41M49 53A28 28 0 0 1 8 18M1 18L9 15V22" />
            <path d="M24 17L33 29L42 17M33 29V48M23 30H43M23 38H43" />
          </svg>
          交易
        </NavItem>
        <NavItem>
          <svg width="58" height="62" viewBox="0 0 58 62" fill="none" stroke={GREY} strokeWidth="3">
            <path d="M40 4H8Q3 4 3 9V53Q3 58 8 58H50Q55 58 55 53V20" />
            <path d="M22 38L25 30L44 11L48 15L29 33ZM48 7L51 4L55 8L52 11Z" fill={GREY} />
          </svg>
          发帖
        </NavItem>
        <NavItem>
          <svg width="56" height="62" viewBox="0 0 56 62" fill="none" stroke={GREY} strokeWidth="3" strokeLinejoin="round">
            <rect x="3" y="6" width="22" height="22" rx="3" /><rect x="3" y="34" width="22" height="22" rx="3" /><rect x="31" y="34" width="22" height="22" rx="3" />
            <path d="M42 4L54.500 17L42 30L29.500 17Z" />
          </svg>
          功能
        </NavItem>
        <NavItem>
          <svg width="60" height="62" viewBox="0 0 60 62"><circle cx="30" cy="31" r="27" fill="none" stroke={GREY} strokeWidth="3" />{[18, 30, 42].map(x => <circle key={x} cx={x} cy="31" r="3" fill={GREY} />)}</svg>
          设自选
        </NavItem>
      </BottomBar>
    </Page>
  );
}
